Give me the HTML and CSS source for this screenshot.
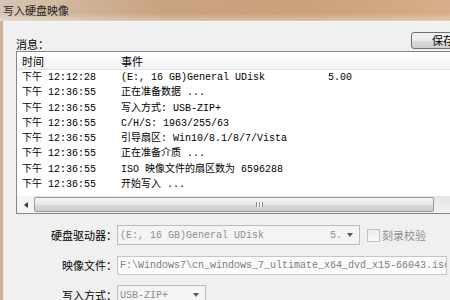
FILE: index.html
```html
<!DOCTYPE html>
<html lang="zh-CN">
<head>
    <meta charset="UTF-8">
    <meta name="viewport" content="width=device-width, initial-scale=1.0">
    <title>写入硬盘映像</title>
    <link rel="stylesheet" href="styles.css">
</head>

<body>
    <div class="window">
        <div class="titlebar">写入硬盘映像</div>

        <div class="frame">
            <div class="client">

                <!-- cabeçalho da lista de mensagens -->
                <div class="msg-head">
                    <span class="msg-label">消息：</span>
                    <button class="btn-save">保存(S)</button>
                </div>

                <div class="listview">
                    <div class="lv-header">
                        <div class="col-time">时间</div>
                        <div class="col-event">事件</div>
                    </div>

                    <div class="lv-body">
                        <div class="lv-row"><span class="col-time">下午 12:12:28</span><span class="col-event"><span class="ev-main">(E:, 16 GB)General UDisk</span>5.00</span></div>
                        <div class="lv-row"><span class="col-time">下午 12:36:55</span><span class="col-event">正在准备数据 ...</span></div>
                        <div class="lv-row"><span class="col-time">下午 12:36:55</span><span class="col-event">写入方式: USB-ZIP+</span></div>
                        <div class="lv-row"><span class="col-time">下午 12:36:55</span><span class="col-event">C/H/S: 1963/255/63</span></div>
                        <div class="lv-row"><span class="col-time">下午 12:36:55</span><span class="col-event">引导扇区: Win10/8.1/8/7/Vista</span></div>
                        <div class="lv-row"><span class="col-time">下午 12:36:55</span><span class="col-event">正在准备介质 ...</span></div>
                        <div class="lv-row"><span class="col-time">下午 12:36:55</span><span class="col-event">ISO 映像文件的扇区数为 6596288</span></div>
                        <div class="lv-row"><span class="col-time">下午 12:36:55</span><span class="col-event">开始写入 ...</span></div>
                    </div>

                    <div class="hscroll">
                        <div class="sb-arrow"><span class="tri-left"></span></div>
                        <div class="sb-thumb"><span class="grip"></span></div>
                    </div>
                </div>

                <!-- opções de gravação -->
                <div class="form">
                    <div class="frow">
                        <label class="flabel">硬盘驱动器：</label>
                        <div class="combo combo-drive">
                            <span class="cb-text">(E:, 16 GB)General UDisk           5.00</span>
                            <span class="cb-btn"><span class="tri-down"></span></span>
                        </div>
                        <span class="check"></span>
                        <span class="check-label">刻录校验</span>
                    </div>

                    <div class="frow">
                        <label class="flabel">映像文件：</label>
                        <div class="edit">F:\Windows7\cn_windows_7_ultimate_x64_dvd_x15-66043.iso</div>
                    </div>

                    <div class="frow">
                        <label class="flabel">写入方式：</label>
                        <div class="combo combo-mode">
                            <span class="cb-text">USB-ZIP+</span>
                            <span class="cb-btn"><span class="tri-down"></span></span>
                        </div>
                    </div>
                </div>

            </div>
        </div>
    </div>
</body>
</html>
```

FILE: styles.css
```css
body {
    margin: 0; /* sem margem padrão */
    width: 450px;
    height: 300px;
    overflow: hidden;
    font-family: "Noto Sans CJK SC", sans-serif;
    color: #000000;
}

.window {
    width: 520px;
    height: 300px;
    background-color: #d2b096; /* moldura da janela */
}

.titlebar {
    height: 21px;
    line-height: 20px;
    padding-left: 3px;
    font-size: 11px;
    color: #1e1e1e;
    background:
        linear-gradient(to bottom, rgba(255, 255, 255, 0) 65%, rgba(255, 255, 255, 0.35)),
        linear-gradient(to right, #d6c6b6 0%, #d0b59b 14%, #c9a27f 32%, #cba17b 58%, #d3aa84 80%, #ddbb98 100%);
}

.frame {
    padding-left: 3px;
}

.client {
    height: 278px;
    background-color: #f0f0f0;
    border-left: 1px solid #efe4da;
    border-top: 1px solid #faf6f2;
    padding-left: 12px;
}

.msg-head {
    width: 483px;
    padding-top: 10px;
    display: flex;
    justify-content: space-between;
    align-items: flex-end;
}

.msg-label {
    font-size: 11px;
    line-height: 14px;
    margin-bottom: -2px;
}

.btn-save {
    width: 88px;
    height: 17px;
    padding: 0 0 0 20px;
    text-align: left;
    font-family: "Noto Sans CJK SC", sans-serif;
    font-size: 11px;
    line-height: 15px;
    color: #000000;
    border: 1px solid #707070;
    border-radius: 3px;
    background: linear-gradient(#f2f2f2 0%, #ebebeb 50%, #dddddd 51%, #cfcfcf 100%);
}

.listview {
    width: 483px;
    margin-top: 2px;
    border: 1px solid #828790;
    background-color: #ffffff;
}

.lv-header {
    display: flex;
    height: 17px;
    line-height: 19px;
    font-size: 11px;
    border-bottom: 1px solid #e3e4e6;
    background: linear-gradient(#ffffff, #f2f3f5);
}

.col-time {
    width: 104px;
    padding-left: 5px;
    box-sizing: border-box;
    flex-shrink: 0;
}

.lv-body {
    height: 126px;
    font-family: "Liberation Mono", "Noto Sans CJK SC", monospace;
    font-size: 10px;
    line-height: 15.3px;
}

.lv-row {
    display: flex;
    white-space: pre;
}

.ev-main {
    display: inline-block;
    width: 207px;
}

.hscroll {
    display: flex;
    height: 17px;
    background: linear-gradient(#e4e4e4, #f2f2f2);
}

.sb-arrow {
    width: 17px;
    display: flex;
    align-items: center;
    justify-content: center;
    background-color: #f4f4f4;
}

.tri-left {
    width: 0;
    height: 0;
    border-top: 3px solid transparent;
    border-bottom: 3px solid transparent;
    border-right: 4px solid #3c3c3c;
}

.sb-thumb {
    width: 400px;
    height: 15px;
    margin-top: 1px;
    box-sizing: border-box;
    border: 1px solid #9a9a9a;
    border-radius: 2px;
    background: linear-gradient(#f6f6f6 0%, #e7e7e7 50%, #d9d9d9 51%, #d0d0d0 100%);
    display: flex;
    align-items: center;
}

.grip {
    margin-left: 221px;
    width: 7px;
    height: 5px;
    background: repeating-linear-gradient(to right, #8c8c8c 0, #8c8c8c 1px, #f8f8f8 1px, #f8f8f8 3px);
}

.form {
    margin-top: 11px;
}

.frow {
    display: flex;
    align-items: center;
    height: 20px;
    margin-bottom: 10px;
}

.flabel {
    width: 101px;
    text-align: right;
    font-size: 11px;
}

.combo {
    height: 20px;
    box-sizing: border-box;
    display: flex;
    align-items: center;
    border: 1px solid #b9bdc1;
    background-color: #f4f4f4;
    font-family: "Liberation Mono", "Noto Sans CJK SC", monospace;
    font-size: 10px;
    color: #8e8e8e;
}

.cb-text {
    padding-left: 2px;
    white-space: pre;
    overflow: hidden;
}

.cb-btn {
    flex: 1;
    display: flex;
    justify-content: center;
    align-items: center;
}

.tri-down {
    width: 0;
    height: 0;
    border-left: 3.5px solid transparent;
    border-right: 3.5px solid transparent;
    border-top: 4px solid #5a5a5a;
}

.combo-drive {
    width: 243px;
}

.combo-drive .cb-text {
    width: 220px;
}

.combo-mode {
    width: 89px;
}

.combo-mode .cb-text {
    width: 66px;
}

.check {
    width: 13px;
    height: 13px;
    box-sizing: border-box;
    margin-left: 7px;
    border: 1px solid #c2c2c2;
    background: linear-gradient(#ececec, #fafafa);
}

.check-label {
    margin-left: 2px;
    font-size: 11px;
    color: #8f8f8f;
}

.edit {
    width: 330px;
    height: 19px;
    box-sizing: border-box;
    padding-left: 2px;
    line-height: 17px;
    border: 1px solid #c3c6c9;
    background-color: #fbfbfb;
    font-family: "Liberation Mono", "Noto Sans CJK SC", monospace;
    font-size: 10px;
    color: #7c7c7c;
    white-space: pre;
    overflow: hidden;
}
```
